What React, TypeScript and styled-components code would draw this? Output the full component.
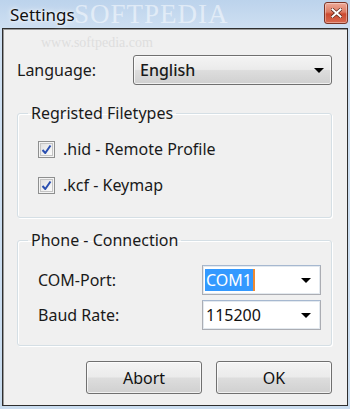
import styled, { createGlobalStyle } from "styled-components";

const GlobalStyle = createGlobalStyle`
  html, body {
    margin: 0;
    padding: 0;
    background: #c6d9ee;
  }
  * {
    box-sizing: border-box;
  }
`;

const Window = styled.div`
  position: relative;
  width: 350px;
  height: 409px;
  overflow: hidden;
  display: flex;
  flex-direction: column;
  background: linear-gradient(180deg, #bcd3ec 0%, #cfe0f2 30px, #c9dcef 100%);
  font-family: "Noto Sans", "Open Sans", sans-serif;
  color: #1a1a1a;
`;

const TitleBar = styled.div`
  position: relative;
  height: 28px;
  display: flex;
  align-items: center;
  justify-content: space-between;
  padding: 0 2px 0 10px;
`;

const Title = styled.span`
  font-size: 17px;
  color: #111;
  text-shadow: 0 0 6px #fff, 0 0 3px #fff;
  position: relative;
  z-index: 1;
`;

const CloseButton = styled.div`
  width: 24px;
  height: 22px;
  margin-top: -3px;
  border: 1px solid #7c3526;
  border-radius: 3px;
  background: linear-gradient(180deg, #eeaa99 0%, #dd7c64 45%, #cc4a30 55%, #d86a50 100%);
  box-shadow: inset 0 0 0 1px rgba(255, 255, 255, 0.35);
  display: flex;
  align-items: center;
  justify-content: center;
  position: relative;
  z-index: 1;
`;

const Watermark = styled.div`
  position: absolute;
  left: 74px;
  top: 0;
  font-family: "Liberation Serif", serif;
  font-size: 27px;
  line-height: 28px;
  letter-spacing: 1px;
  color: rgba(255, 255, 255, 0.5);
  pointer-events: none;
`;

const SubWatermark = styled.div`
  position: absolute;
  left: 38px;
  top: 6px;
  font-family: "Liberation Serif", serif;
  font-size: 14px;
  line-height: 16px;
  color: #dedede;
  pointer-events: none;
`;

const Client = styled.div`
  position: relative;
  margin: 0 2px 3px 2px;
  flex: 1;
  background: #f0f0f0;
  border: 1px solid #2e2e2e;
  box-shadow: inset 1px 1px 0 #9a9a9a;
  padding: 26px 15px 0 14px;
  display: flex;
  flex-direction: column;
`;

const Row = styled.div<{ $gap?: number }>`
  display: flex;
  align-items: center;
  justify-content: space-between;
  margin-top: ${(p) => p.$gap ?? 0}px;
`;

const Label = styled.span`
  font-size: 16px;
`;

const DropButton = styled.div`
  width: 199px;
  height: 30px;
  border: 1px solid #707070;
  border-radius: 3px;
  background: linear-gradient(180deg, #f4f4f4 0%, #ebebeb 48%, #dddddd 52%, #d0d0d0 100%);
  box-shadow: inset 0 0 0 1px rgba(255, 255, 255, 0.7);
  display: flex;
  align-items: center;
  justify-content: space-between;
  padding: 0 7px 0 6px;
  font-size: 16px;
  font-weight: 500;
`;

const Arrow = styled.span`
  width: 0;
  height: 0;
  border-left: 5px solid transparent;
  border-right: 5px solid transparent;
  border-top: 5px solid #000;
`;

const Group = styled.fieldset<{ $gap: number; $height: number }>`
  margin: ${(p) => p.$gap}px 0 0 0;
  height: ${(p) => p.$height}px;
  padding: 0 10px 0 20px;
  border: 1px solid #d5dfe5;
  border-radius: 3px;
  box-shadow: inset 1px 1px 0 #fff, 1px 1px 0 #fff;
  min-width: 0;
`;

const Legend = styled.legend`
  font-size: 16px;
  line-height: 20px;
  padding: 0 3px;
  margin-left: -10px;
`;

const CheckRow = styled.label<{ $gap: number }>`
  display: flex;
  align-items: center;
  gap: 8px;
  margin-top: ${(p) => p.$gap}px;
  font-size: 16px;
  line-height: 20px;
`;

const CheckBox = styled.span`
  width: 17px;
  height: 17px;
  border: 1px solid #8e8f8f;
  background: linear-gradient(135deg, #dcdcdc 0%, #f2f2f2 60%, #ffffff 100%);
  box-shadow: inset 0 0 0 1px #f4f4f4, inset 0 0 0 2px #c4c4c4;
  display: flex;
  align-items: center;
  justify-content: center;
`;

const Combo = styled.div`
  width: 119px;
  height: 30px;
  background: #fff;
  border: 1px solid #abadb3;
  border-top-color: #a6b8d0;
  box-shadow: inset 0 0 0 1px #e3e9ef;
  display: flex;
  align-items: center;
  justify-content: space-between;
  padding: 0 9px 0 2px;
  font-size: 16px;
`;

const ComboText = styled.span<{ $selected?: boolean }>`
  padding: 0 1px;
  line-height: 22px;
  background: ${(p) => (p.$selected ? "#3399ff" : "transparent")};
  color: ${(p) => (p.$selected ? "#fff" : "#111")};
  border-right: ${(p) => (p.$selected ? "2px solid #f08a30" : "none")};
`;

const ButtonRow = styled.div`
  display: flex;
  justify-content: flex-end;
  gap: 14px;
  margin-top: 15px;
`;

const Button = styled.button`
  width: 116px;
  height: 33px;
  border: 1px solid #707070;
  border-radius: 3px;
  background: linear-gradient(180deg, #f4f4f4 0%, #ebebeb 48%, #dddddd 52%, #d0d0d0 100%);
  box-shadow: inset 0 0 0 1px rgba(255, 255, 255, 0.7);
  font-family: "Noto Sans", "Open Sans", sans-serif;
  font-size: 16px;
  color: #111;
  padding: 0;
`;

const Check = () => (
  <svg width="11" height="11" viewBox="0 0 11 11">
    <path d="M1.5 6 L4.3 9 L9.5 1.5" fill="none" stroke="#2a4fb0" strokeWidth="2" strokeLinejoin="round" />
  </svg>
);

const App = () => {
  return (
    <Window>
      <GlobalStyle />
      <TitleBar>
        <Watermark>SOFTPEDIA</Watermark>
        <Title>Settings</Title>
        <CloseButton>
          <svg width="11" height="10" viewBox="0 0 11 10">
            <path d="M1.5 1.5 L9.5 8.5 M9.5 1.5 L1.5 8.5" stroke="#5a2419" strokeWidth="3.4" strokeLinecap="square" />
            <path d="M1.5 1.5 L9.5 8.5 M9.5 1.5 L1.5 8.5" stroke="#fff" strokeWidth="2" strokeLinecap="square" />
          </svg>
        </CloseButton>
      </TitleBar>
      <Client>
        <SubWatermark>www.softpedia.com</SubWatermark>
        <Row>
          <Label>Language:</Label>
          <DropButton>
            <span>English</span>
            <Arrow />
          </DropButton>
        </Row>

        <Group $gap={18} $height={115}>
          <Legend>Regristed Filetypes</Legend>
          <CheckRow $gap={16}>
            <CheckBox><Check /></CheckBox>
            .hid - Remote Profile
          </CheckRow>
          <CheckRow $gap={16}>
            <CheckBox><Check /></CheckBox>
            .kcf - Keymap
          </CheckRow>
        </Group>

        <Group $gap={12} $height={116}>
          <Legend>Phone - Connection</Legend>
          <Row $gap={15}>
            <Label>COM-Port:</Label>
            <Combo>
              <ComboText $selected>COM1</ComboText>
              <Arrow />
            </Combo>
          </Row>
          <Row $gap={5}>
            <Label>Baud Rate:</Label>
            <Combo>
              <ComboText>115200</ComboText>
              <Arrow />
            </Combo>
          </Row>
        </Group>

        <ButtonRow>
          <Button>Abort</Button>
          <Button>OK</Button>
        </ButtonRow>
      </Client>
    </Window>
  );
};

export default App;
